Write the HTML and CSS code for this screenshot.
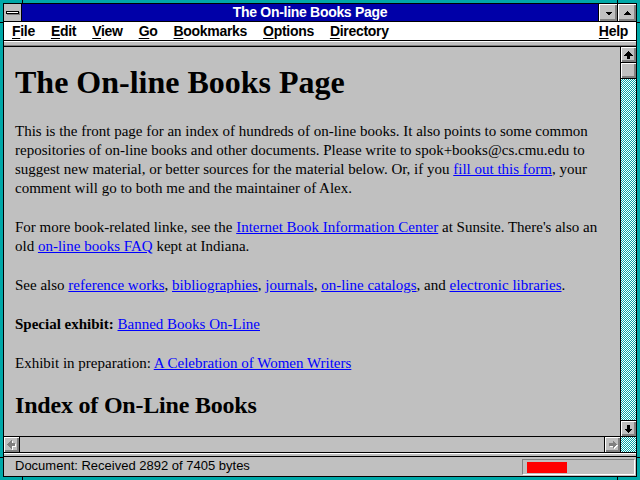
FILE: index.html
```html
<!DOCTYPE html>
<html lang="en">
<head>
  <meta charset="UTF-8">
  <title>The On-line Books Page</title>
  <link rel="stylesheet" href="styles.css">
</head>
<body>

  <div class="frame">
    <!-- resize corner ticks on the sizing border -->
    <span class="tick tick-v" style="left:22px;top:0"></span>
    <span class="tick tick-v" style="left:617px;top:0"></span>
    <span class="tick tick-v" style="left:22px;bottom:0"></span>
    <span class="tick tick-v" style="left:617px;bottom:0"></span>
    <span class="tick tick-h" style="top:22px;left:0"></span>
    <span class="tick tick-h" style="top:22px;right:0"></span>
    <span class="tick tick-h" style="top:457px;left:0"></span>
    <span class="tick tick-h" style="top:457px;right:0"></span>

    <div class="window">

      <div class="titlebar">
        <div class="sysbox"><span></span></div>
        <div class="title">The On-line Books Page</div>
        <div class="tbtn">
          <svg class="ic" width="16" height="16" viewBox="0 0 16 16"><polygon points="5,7 12,7 8.5,10.5" fill="#000"/></svg>
        </div>
        <div class="tbtn">
          <svg class="ic" width="16" height="16" viewBox="0 0 16 16"><polygon points="8.5,6 12,9.5 5,9.5" fill="#000"/></svg>
        </div>
      </div>

      <div class="menubar">
        <span><u>F</u>ile</span>
        <span><u>E</u>dit</span>
        <span><u>V</u>iew</span>
        <span><u>G</u>o</span>
        <span><u>B</u>ookmarks</span>
        <span><u>O</u>ptions</span>
        <span><u>D</u>irectory</span>
        <span class="help"><u>H</u>elp</span>
      </div>

      <div class="strip"></div>

      <div class="main">
        <div class="view">
          <h1>The On-line Books Page</h1>

          <p>This is the front page for an index of hundreds of on-line books. It also points to some common
          repositories of on-line books and other documents. Please write to spok+books@cs.cmu.edu to
          suggest new material, or better sources for the material below. Or, if you <a href="#">fill out this form</a>, your
          comment will go to both me and the maintainer of Alex.</p>

          <p>For more book-related linke, see the <a href="#">Internet Book Information Center</a> at Sunsite. There's also an
          old <a href="#">on-line books FAQ</a> kept at Indiana.</p>

          <p>See also <a href="#">reference works</a>, <a href="#">bibliographies</a>, <a href="#">journals</a>,
          <a href="#">on-line catalogs</a>, and <a href="#">electronic libraries</a>.</p>

          <p><b>Special exhibit:</b> <a href="#">Banned Books On-Line</a></p>

          <p>Exhibit in preparation: <a href="#">A Celebration of Women Writers</a></p>

          <h2>Index of On-Line Books</h2>
        </div>

        <div class="vscroll">
          <div class="sbtn up">
            <svg class="ic" width="15" height="15" viewBox="0 0 15 15"><polygon points="7.5,4 12,8.5 9,8.5 9,12 6,12 6,8.5 3,8.5" fill="#000"/></svg>
          </div>
          <div class="sbtn thumb"></div>
          <div class="track dither"></div>
          <div class="sbtn down">
            <svg class="ic" width="15" height="15" viewBox="0 0 15 15"><polygon points="7.5,12 12,7.5 9,7.5 9,4 6,4 6,7.5 3,7.5" fill="#000"/></svg>
          </div>
        </div>
      </div>

      <div class="hscroll">
        <div class="sbtn left">
          <svg class="ic" width="15" height="15" viewBox="0 0 15 15">
            <polygon points="4,8.5 8.5,4 8.5,7 12,7 12,10 8.5,10 8.5,13" fill="#fff"/>
            <polygon points="3,7.5 7.5,3 7.5,6 11,6 11,9 7.5,9 7.5,12" fill="#808080"/>
          </svg>
        </div>
        <div class="htrack"></div>
        <div class="sbtn right">
          <svg class="ic" width="15" height="15" viewBox="0 0 15 15">
            <polygon points="13,8.5 8.5,4 8.5,7 5,7 5,10 8.5,10 8.5,13" fill="#fff"/>
            <polygon points="12,7.5 7.5,3 7.5,6 4,6 4,9 7.5,9 7.5,12" fill="#808080"/>
          </svg>
        </div>
        <div class="corner dither"></div>
      </div>

      <div class="sep"></div>

      <div class="status">
        <span>Document: Received 2892 of 7405 bytes</span>
        <div class="progress"><div class="bar" style="width:40px"></div></div>
      </div>

    </div>
  </div>

</body>
</html>
```

FILE: styles.css
```css
body {
  margin: 0;
  font-family: "Liberation Sans", Arial, sans-serif;
  background: #00a8a8;
}

.frame {
  position: relative;
  width: 640px;
  height: 480px;
  box-sizing: border-box;
  padding: 3px;
  background: #00a8a8;
}

.tick {
  position: absolute;
  background: #000;
}

.tick-v {
  width: 1px;
  height: 3px;
}

.tick-h {
  width: 3px;
  height: 1px;
}

.window {
  height: 100%;
  box-sizing: border-box;
  border: 1px solid #000;
  background: #c0c0c0;
  display: flex;
  flex-direction: column;
}

.ic {
  display: block;
  shape-rendering: crispEdges;
}

/* title bar */
.titlebar {
  display: flex;
  height: 17px;
  border-bottom: 1px solid #000;
}

.sysbox {
  width: 17px;
  border-right: 1px solid #000;
  background: #c0c0c0;
  display: flex;
  align-items: center;
  justify-content: center;
}

.sysbox span {
  width: 11px;
  height: 1px;
  border: 1px solid #000;
  background: #fff;
  box-shadow: 1px 1px 0 #808080;
}

.title {
  flex: 1;
  background: #0000a8;
  color: #fff;
  font-size: 14px;
  font-weight: bold;
  letter-spacing: -0.3px;
  line-height: 17px;
  text-align: center;
}

.tbtn {
  width: 18px;
  border-left: 1px solid #000;
  background: #c0c0c0;
  box-shadow: inset 1px 1px #fff, inset -1px -1px #808080, inset -2px -2px #808080;
  display: flex;
  align-items: center;
  justify-content: center;
}

/* menu */
.menubar {
  display: flex;
  gap: 16px;
  height: 18px;
  padding: 0 8px;
  background: #fff;
  border-bottom: 1px solid #000;
  font-size: 14px;
  font-weight: bold;
  letter-spacing: -0.3px;
  line-height: 18px;
}

.menubar u {
  text-underline-offset: 2px;
}

.menubar .help {
  margin-left: auto;
}

.strip {
  height: 3px;
  border-top: 1px solid #fff;
  border-bottom: 1px solid #808080;
}

/* document area */
.main {
  flex: 1;
  min-height: 0;
  display: flex;
  border-top: 1px solid #000;
}

.view {
  flex: 1;
  overflow: hidden;
  padding: 0 8px 0 11px;
  font-family: "Liberation Serif", "Times New Roman", serif;
  font-size: 15px;
  line-height: 19px;
  color: #000;
}

.view h1 {
  font-size: 32px;
  line-height: 37px;
  margin: 17px 0 21px;
}

.view h2 {
  font-size: 24px;
  line-height: 26px;
  letter-spacing: -0.2px;
  margin: -1px 0 20px;
}

.view p {
  margin: 0 0 20px;
}

.view a {
  color: #0000ff;
  text-decoration: underline;
}

/* scroll bars */
.sbtn {
  width: 15px;
  height: 15px;
  background: #c0c0c0;
  box-shadow: inset 1px 1px #fff, inset -1px -1px #808080, inset -2px -2px #808080;
}

.dither {
  background: repeating-conic-gradient(#00a8a8 0 25%, #fff 0 50%) 0 0 / 2px 2px;
}

.vscroll {
  width: 15px;
  border-left: 1px solid #000;
  display: flex;
  flex-direction: column;
}

.vscroll .up,
.vscroll .thumb {
  border-bottom: 1px solid #000;
}

.vscroll .down {
  border-top: 1px solid #000;
}

.vscroll .track {
  flex: 1;
}

.hscroll {
  display: flex;
  height: 15px;
  border-top: 1px solid #000;
  border-bottom: 1px solid #000;
}

.hscroll .left {
  border-right: 1px solid #000;
}

.htrack {
  flex: 1;
  background: #c0c0c0;
}

.hscroll .right {
  border-left: 1px solid #000;
  border-right: 1px solid #000;
}

.corner {
  width: 15px;
}

.sep {
  height: 2px;
  border-top: 1px solid #fff;
  border-bottom: 1px solid #000;
}

/* status line */
.status {
  display: flex;
  height: 19px;
  padding-left: 11px;
  font-size: 13px;
  line-height: 18px;
  color: #000;
}

.progress {
  margin: 2px 1px 0 auto;
  width: 111px;
  height: 14px;
  border-top: 1px solid #808080;
  border-left: 1px solid #808080;
  border-bottom: 1px solid #fff;
  border-right: 1px solid #fff;
}

.progress .bar {
  height: 11px;
  margin: 2px 0 0 4px;
  background: #ff0000;
}
```
